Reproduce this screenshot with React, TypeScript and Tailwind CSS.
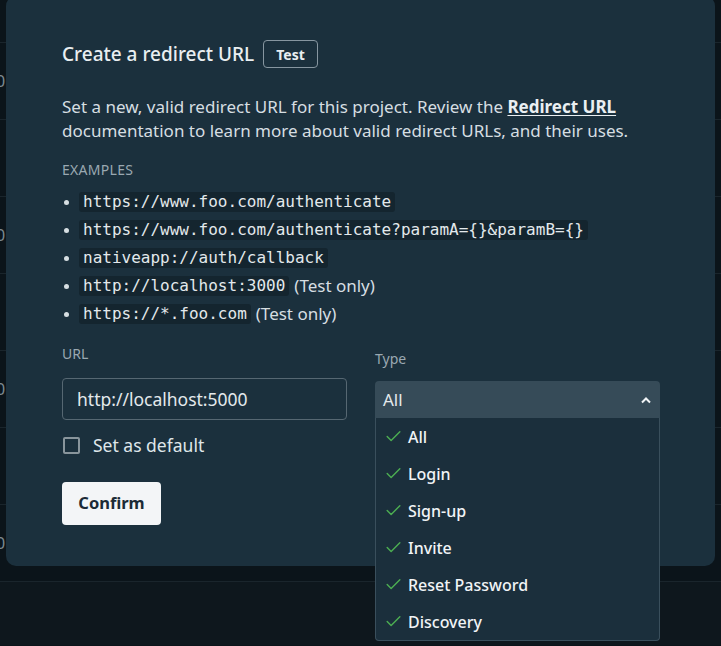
import { Check } from "lucide-react";

const SANS = "font-['Noto_Sans',_'Roboto',_sans-serif]";

const examples = [
  { code: "https://www.foo.com/authenticate", note: "" },
  { code: "https://www.foo.com/authenticate?paramA={}&paramB={}", note: "" },
  { code: "nativeapp://auth/callback", note: "" },
  { code: "http://localhost:3000", note: "(Test only)" },
  { code: "https://*.foo.com", note: "(Test only)" },
];

const types = ["All", "Login", "Sign-up", "Invite", "Reset Password", "Discovery"];

export default function App() {
  return (
    <div className={`relative h-[646px] w-[721px] overflow-hidden bg-[#0b141a] ${SANS}`}>
      {/* page behind the dialog */}
      <div className="flex flex-col">
        <div className="h-[43px] border-b border-[#1a252c]" />
        {[0, 1, 2, 3, 4, 5, 6].map((i) => (
          <div key={i} className="flex h-[77px] items-center border-b border-[#1a252c]">
            {i % 2 === 0 && <span className="ml-[-4px] text-[16px] text-[#7d8a92]">0</span>}
          </div>
        ))}
        <div className="h-[63px] bg-[#0e171d]" />
      </div>

      {/* dialog */}
      <div className="absolute left-[6px] top-[-4px] h-[570px] w-[709px] rounded-[10px] bg-[#1b303d] pl-[56px] pr-[55px] pt-[44px]">
        <div className="flex items-center gap-[9px]">
          <h2 className="text-[19px] font-medium leading-[28px] text-[#e9eef1]">Create a redirect URL</h2>
          <span className="flex h-[28px] items-center rounded-[4px] border border-[#8796a0] px-[12px] text-[14px] font-bold text-[#e9eef1]">
            Test
          </span>
        </div>

        <p className="mt-[27px] text-[17px] leading-[24px] text-[#d6dee2]">
          Set a new, valid redirect URL for this project. Review the{" "}
          <span className="font-bold text-[#eaeff2] underline underline-offset-2">Redirect URL</span>{" "}
          documentation to learn more about valid redirect URLs, and their uses.
        </p>

        <div className="mt-[17px] text-[14px] leading-[20px] tracking-[0.3px] text-[#9aa8b1]">EXAMPLES</div>

        <ul className="mt-[8px]">
          {examples.map((e) => (
            <li key={e.code} className="flex h-[28px] items-center text-[17px] text-[#d6dee2]">
              <span className="ml-[2px] mr-[10px] h-[5px] w-[5px] rounded-full bg-[#d6dee2]" />
              <code className="rounded-[3px] bg-[#14252f] px-[4px] font-['DejaVu_Sans_Mono',_monospace] text-[16px] leading-[20px] text-[#e3e9ec]">
                {e.code}
              </code>
              {e.note && <span className="ml-[5px]">{e.note}</span>}
            </li>
          ))}
        </ul>

        <div className="mt-[16px] grid grid-cols-[285px_285px] gap-x-[28px]">
          <div>
            <div className="text-[14px] leading-[20px] text-[#9aa8b1]">URL</div>
            <div className="mt-[14px] flex h-[42px] items-center rounded-[4px] border border-[#566772] px-[14px] text-[17.5px] text-[#e3e9ec]">
              http://localhost:5000
            </div>
            <label className="mt-[14px] flex h-[22px] items-center">
              <span className="ml-[1px] h-[17px] w-[17px] rounded-[2px] border-2 border-[#89959c]" />
              <span className="ml-[13px] text-[17.5px] text-[#dfe6ea]">Set as default</span>
            </label>
            <button className="mt-[26px] h-[43px] w-[99px] rounded-[4px] bg-[#f3f5f7] text-[16.5px] font-bold text-[#1b2b36]">
              Confirm
            </button>
          </div>

          <div>
            <div className="mt-[5px] text-[14px] leading-[20px] text-[#9aa8b1]">Type</div>
            <div className="relative mt-[12px]">
              <div className="flex h-[37px] items-center justify-between rounded-t-[4px] bg-[#364b58] pl-[8px] pr-[8px] text-[17px] text-[#e3e9ec]">
                <span>All</span>
                <svg width="12" height="8" viewBox="0 0 12 8" fill="none">
                  <path d="M2 6.5 6 2.5 10 6.5" stroke="#f1f4f6" strokeWidth="2" />
                </svg>
              </div>
              <div className="absolute left-0 top-full w-full rounded-b-[4px] border border-t-0 border-[#3a4f5c] bg-[#1b2f3c]">
                {types.map((t) => (
                  <div key={t} className="flex h-[37px] items-center pl-[8px] text-[16px] font-medium text-[#f1f4f6]">
                    <Check size={19} strokeWidth={1.8} className="text-[#4cae52]" />
                    <span className="ml-[5px]">{t}</span>
                  </div>
                ))}
              </div>
            </div>
          </div>
        </div>
      </div>
    </div>
  );
}
